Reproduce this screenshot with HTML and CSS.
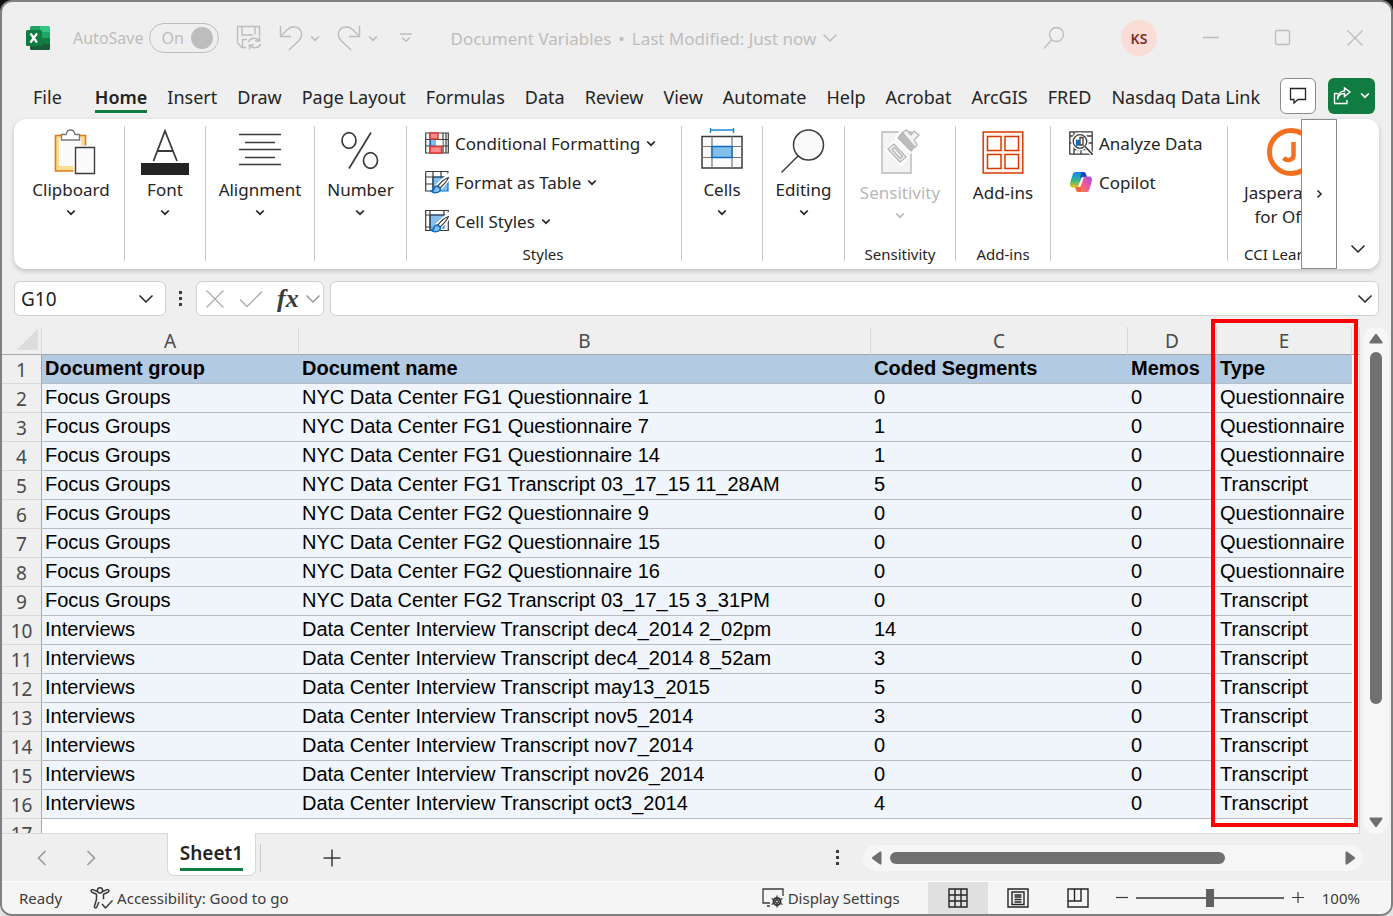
FILE: index.html
```html
<!DOCTYPE html>
<html lang="en">
<head>
  <meta charset="UTF-8">
  <meta name="viewport" content="width=device-width, initial-scale=1">
  <title>Document Variables</title>
  <link rel="stylesheet" href="styles.css">
</head>
<body>

  <svg class="defs" width="0" height="0" aria-hidden="true">
    <symbol id="chev" viewBox="0 0 16 10"><path d="M1.5 1.5 8 8l6.500-6.500" fill="none" stroke="currentColor" stroke-width="1.500"/></symbol>
    <symbol id="chev-s" viewBox="0 0 10 7"><path d="M1.200 1.500 5 5.200l3.800-3.700" fill="none" stroke="currentColor" stroke-width="1.700"/></symbol>
    <symbol id="brush" viewBox="0 0 24 24">
      <path d="M23 6 13 15l2.500 2.500L24 8z" fill="#fff" stroke="#fff" stroke-width="4"/>
      <path d="M23.500 7.500c-4 1.500-8 5-10.500 8.500l2 2c3.500-3 7-7 8.500-10.500z" fill="#fff" stroke="#3b3b3b" stroke-width="1.200"/>
      <path d="M12.500 16c-2.500 0-3.300 1.500-3.500 3-.3 1.300-1.500 2-3 2 2.500 2.500 9 2.500 9.500-2z" fill="#83beec" stroke="#0f6cbd" stroke-width="1.400"/>
    </symbol>
  </svg>

  <div class="window">

    <header class="titlebar">
      <svg class="logo" viewBox="0 0 24 24" width="24" height="24">
        <path d="M6 0h9v6H4V1.500Q4 0 6 0z" fill="#21a366"/>
        <path d="M14 0h8.500Q24 0 24 1.500V6H14z" fill="#33c481"/>
        <path d="M4 6h10v6H4z" fill="#107c41"/>
        <path d="M14 6h10v6H14z" fill="#21a366"/>
        <path d="M14 12h10v6H14z" fill="#107c41"/>
        <path d="M4 12h10v6h10v4.500q0 1.500-1.500 1.500H5.500Q4 24 4 22.500z" fill="#185c37"/>
        <rect y="4" width="16" height="16" rx="1.500" fill="#107c41"/>
        <path d="m4.500 7.500 6.500 9M11 7.500l-6.500 9" stroke="#fff" stroke-width="2.200"/>
      </svg>
      <label class="autosave" for="autosave">AutoSave
        <span class="toggle"><input type="checkbox" id="autosave" checked disabled><span>On</span><i></i></span>
      </label>
      <button class="bare save" aria-label="Save"><svg width="26" height="26" viewBox="0 0 26 26" fill="none" stroke="currentColor" stroke-width="1.400">
        <path d="M10 22.500H6L1.500 18V1.500h22V11M6 1.500V10h11M19 1.500v8M6.500 22v-7.500H11"/>
        <path d="M12.500 17c1.500-4.500 8-5 10.500-1.500M23.500 11.500v4.500H19M24.500 19c-1.500 4.500-8 5-10.500 1.500M13.500 24.500V20H18"/></svg></button>
      <button class="bare undo" aria-label="Undo"><svg width="24" height="26" viewBox="0 0 24 26" fill="none" stroke="currentColor" stroke-width="1.500"><path d="M1.500 1v10.500H12M2 11 8.500 4.500c4-4 9-3.500 12-.5s3 8-.5 11.500L10 25"/></svg></button>
      <button class="bare" aria-label="Undo list"><svg width="10" height="7"><use href="#chev-s"/></svg></button>
      <button class="bare redo" aria-label="Redo"><svg width="24" height="26" viewBox="0 0 24 26" fill="none" stroke="currentColor" stroke-width="1.500"><path d="M22.500 1v10.500H12M22 11l-6.500-6.500c-4-4-9-3.500-12-.5s-3 8 .5 11.500L14 25"/></svg></button>
      <button class="bare" aria-label="Redo list"><svg width="10" height="7"><use href="#chev-s"/></svg></button>
      <button class="bare customize" aria-label="Customize toolbar"><svg width="12" height="10" viewBox="0 0 12 10" fill="none" stroke="currentColor" stroke-width="1.500"><path d="M0 1h12M2 4.500l4 3.700 4-3.700"/></svg></button>
      <button class="bare doc-title">Document Variables<span>•</span>Last Modified: Just now <svg width="16" height="10"><use href="#chev"/></svg></button>
      <button class="bare search" aria-label="Search"><svg width="22" height="24" viewBox="0 0 22 24" fill="none" stroke="currentColor" stroke-width="1.400"><circle cx="13.500" cy="8.500" r="7"/><path d="M8.500 14 1 22.500"/></svg></button>
      <button class="avatar">KS</button>
      <div class="window-buttons">
        <button class="bare" aria-label="Minimize"><svg width="18" height="18"><path d="M1 8.500h16" stroke="currentColor" stroke-width="1.300"/></svg></button>
        <button class="bare" aria-label="Maximize"><svg width="18" height="18" fill="none"><rect x="1.500" y="1.500" width="14" height="14" rx="1.500" stroke="currentColor" stroke-width="1.400"/></svg></button>
        <button class="bare" aria-label="Close"><svg width="18" height="18"><path d="m1.500 1.500 15 15m0-15-15 15" stroke="currentColor" stroke-width="1.400"/></svg></button>
      </div>
    </header>

    <nav class="tabs">
      <button class="file">File</button>
      <button class="active">Home</button>
      <button>Insert</button>
      <button>Draw</button>
      <button>Page Layout</button>
      <button>Formulas</button>
      <button>Data</button>
      <button>Review</button>
      <button>View</button>
      <button>Automate</button>
      <button>Help</button>
      <button>Acrobat</button>
      <button>ArcGIS</button>
      <button>FRED</button>
      <button>Nasdaq Data Link</button>
      <div class="tab-actions">
        <button class="comment" aria-label="Comments"><svg width="18" height="18" viewBox="0 0 18 18" fill="none" stroke="currentColor" stroke-width="1.300"><path d="M1.500 1.500h15v11H9l-4 3.500v-3.500H1.500z"/></svg></button>
        <button class="share" aria-label="Share"><svg width="18" height="18" viewBox="0 0 18 18" fill="none" stroke="currentColor" stroke-width="1.400"><path d="M5 6.500H1.500v10H14V13M4.500 12.500c.5-4 3-6 7-6V9.500L17 5l-5.500-4v3C7 4 4.500 7.500 4.500 12.500z"/></svg><svg width="10" height="7"><use href="#chev-s"/></svg></button>
      </div>
    </nav>

    <section class="ribbon">
      <div class="group g-clipboard">
        <button class="big"><span class="icon"><svg width="50" height="46" viewBox="-8 0 50 46">
          <path d="M1.500 6.500h30V42h-30z" fill="#fbdc93" stroke="#e07b16" stroke-width="1.600"/>
          <path d="M5 9h22v28H5z" fill="#fafafa"/>
          <path d="M19.500 16.500h22V46h-22z" fill="#fff"/>
          <path d="M7.500 11V5.500h4.700C13 -.5 20 -.5 21 5.500h4.500V11z" fill="#fff" stroke="#777" stroke-width="1.300"/>
          <path d="M21.500 18.500h19v26h-19z" fill="#fafafa" stroke="#3b3b3b" stroke-width="1.400"/></svg></span>Clipboard<svg width="10" height="7"><use href="#chev-s"/></svg></button>
      </div>
      <div class="group g-font">
        <button class="big"><span class="icon"><svg width="48" height="46" viewBox="0 0 48 46"><path d="M12.500 32 24 2l12 30M16.500 22h15" fill="none" stroke="#3b3b3b" stroke-width="1.800"/><path d="M0 34h48v12H0z" fill="#242424"/></svg></span>Font<svg width="10" height="7"><use href="#chev-s"/></svg></button>
      </div>
      <div class="group g-align">
        <button class="big"><span class="icon"><svg width="42" height="46" viewBox="0 0 42 46"><path d="M0 5.500h42M6 13.500h30M0 20.500h42M6 28.500h30M0 35.500h42" stroke="#3b3b3b" stroke-width="1.400"/></svg></span>Alignment<svg width="10" height="7"><use href="#chev-s"/></svg></button>
      </div>
      <div class="group g-number">
        <button class="big"><span class="icon"><svg width="38" height="46" viewBox="0 0 38 46" fill="none" stroke="#3b3b3b" stroke-width="1.700"><path d="M30 3.500 8 39.500"/><ellipse cx="8" cy="11.500" rx="7" ry="7.800"/><ellipse cx="29.500" cy="31.500" rx="7" ry="7.800"/></svg></span>Number<svg width="10" height="7"><use href="#chev-s"/></svg></button>
      </div>
      <div class="group g-styles">
        <button class="row"><svg width="24" height="24" viewBox="0 0 24 24" fill="none" stroke="#3b3b3b" stroke-width="1.200"><path d="M.7 2h22.600v20H.7zM.7 8.500h22.600M.7 15h22.600M5 2v20M18 2v20M21 2v20"/><path d="M5.500 8.500h5V15h-5z" fill="#83beec" stroke="#0f6cbd"/><path d="M10.500 9h7v5.500h-7z" fill="#fff" stroke="none"/><path d="M5 2h8v6H5zM5 15.500h11.500V22H5z" fill="#ff8b8b" stroke="#e3342f" stroke-width="1.400"/></svg>Conditional Formatting<svg width="10" height="7"><use href="#chev-s"/></svg></button>
        <button class="row"><svg width="24" height="24" viewBox="0 0 24 24" fill="none" stroke="#3b3b3b" stroke-width="1.200"><path d="M8 7h15v14H8z" fill="#83beec" stroke="#0f6cbd"/><path d="M.7 1.500h22.600M.7 1.500V21h7M.7 7h22M.7 14H8M8 1.500V21M16 1.500V7M23 1.500V6"/><use href="#brush"/></svg>Format as Table<svg width="10" height="7"><use href="#chev-s"/></svg></button>
        <button class="row"><svg width="24" height="24" viewBox="0 0 24 24" fill="none" stroke="#3b3b3b" stroke-width="1.200"><path d="M5 6h14v13H5z" fill="#83beec" stroke="#0f6cbd"/><path d="M.7 1.500h22.600v20H.7zM.7 6h22M5 1.500V21M19 1.500V6M.7 18H5"/><use href="#brush"/></svg>Cell Styles<svg width="10" height="7"><use href="#chev-s"/></svg></button>
        <div class="group-name">Styles</div>
      </div>
      <div class="group g-cells">
        <button class="big"><span class="icon"><svg width="42" height="48" viewBox="0 2 42 48" fill="none"><path d="M9.500 4h23M9.500 2v5M32.500 2v5" stroke="#1a86d0" stroke-width="1.400" /><path d="M1 10.500h40V42H1z" fill="#fafafa" stroke="#3b3b3b" stroke-width="1.500"/><path d="M1 20.500h40M1 31.500h40M11 10.500V42M31 10.500V42" stroke="#777" stroke-width="1.200"/><path d="M11 20.500h20v11H11z" fill="#83beec" stroke="#0f6cbd" stroke-width="1.500"/></svg></span>Cells<svg width="10" height="7"><use href="#chev-s"/></svg></button>
      </div>
      <div class="group g-editing">
        <button class="big"><span class="icon"><svg width="46" height="46" viewBox="2 1 46 46" fill="#fafafa" stroke="#3b3b3b" stroke-width="1.500"><circle cx="29.500" cy="17" r="15"/><path d="M19 28 2.500 44.500"/></svg></span>Editing<svg width="10" height="7"><use href="#chev-s"/></svg></button>
      </div>
      <div class="group g-sensitivity">
        <button class="big tall" disabled><span class="icon"><svg width="40" height="46" viewBox="0 0 40 46" fill="#f3f3f3" stroke="#b8b8b8" stroke-width="1.400"><path d="M2 4h29v41H2z"/><g stroke="#fff" stroke-width="5"><path d="m8 22 6-6 13 13-6 6zM17 10l5-6 14 13-6 6z"/></g><path d="m8 21 6-5 12 13-6 5z"/><path d="m12 21.500 2.500-2 8 9-2.500 2z"/><path d="m18 10 4-5 13 13-4 5z" fill="#bdbdbd"/><path d="m22.500 4.500 4-2.500 4.500 5 3-4 5 4-5 5 3 5-2 2.500z"/></svg></span>Sensitivity<svg width="10" height="7"><use href="#chev-s"/></svg></button>
        <div class="group-name">Sensitivity</div>
      </div>
      <div class="group g-addins">
        <button class="big tall"><span class="icon"><svg width="42" height="46" viewBox="0 0 42 46" fill="#fff" stroke="#d83b01" stroke-width="1.500"><path d="M1.200 4h39.600v41H1.200z" fill="#fff5ef"/><path d="M5.500 8.500H19v14H5.500zM23 8.500h13.500v14H23zM5.500 26.500H19v14H5.500zM23 26.500h13.500v14H23z"/></svg></span>Add-ins</button>
        <div class="group-name">Add-ins</div>
      </div>
      <div class="group g-analysis">
        <button class="row"><svg width="24" height="24" viewBox="0 0 24 24" fill="none" stroke="#3b3b3b" stroke-width="1.300"><path d="M.8.800h22.400v22.400H.8zM.8 5h22.400M5 1v22M5 18.500h12M.8 12H5M19 12h4M12 19v4"/><circle cx="11" cy="10.500" r="7.500" fill="#fff" stroke="#fff" stroke-width="3"/><circle cx="11" cy="10.500" r="6.800" fill="#fff"/><path d="m16 15.500 7 7.500" stroke="#fff" stroke-width="4"/><path d="m16 15.500 7.500 8" stroke-width="1.600"/><path d="M7.500 9.500h2.500V14H7.500z" fill="#0f6cbd" stroke="#0f6cbd"/><path d="M11 6.500h3V14h-3z"/></svg>Analyze Data</button>
        <button class="row"><svg width="24" height="24" viewBox="0 0 24 24">
          <defs>
            <linearGradient id="cp1" x1="0" y1="0" x2="0" y2="1"><stop offset="0" stop-color="#0f8cf0"/><stop offset=".55" stop-color="#37b58c"/><stop offset="1" stop-color="#f2c40c"/></linearGradient>
            <linearGradient id="cp2" x1="1" y1="0" x2="0" y2="1"><stop offset="0" stop-color="#9b4df0"/><stop offset=".5" stop-color="#f0569a"/><stop offset="1" stop-color="#ff8a3c"/></linearGradient>
          </defs>
          <path d="M6.500 2h8l-4 13c-.8 2-1.500 2.500-4 2.500H4c-3 0-3.500-2.500-2.500-6L3.500 5C4 3 5 2 6.500 2z" fill="url(#cp1)"/>
          <path d="M12 2h2.500c2 0 2.300 1 3 3.500l.5 1.500h-4c-2 0-2.500 1-3 2.500z" fill="#1548c0"/>
          <path d="M17.500 22h-8l4-13c.8-2 1.500-2.500 4-2.500H20c3 0 3.500 2.500 2.500 6L20.500 19c-.5 2-1.500 3-3 3z" fill="url(#cp2)"/>
          <path d="M12 22H9.500c-2 0-2.300-1-3-3.500L6 17h4c2 0 2.500-1 3-2.500z" fill="#f4663c"/>
          <path d="M12.500 8h2.300L11.500 16.500H9z" fill="#fff"/></svg>Copilot</button>
      </div>
      <div class="group g-jasper">
        <button class="big tall"><span class="icon"><svg width="50" height="48" viewBox="0 0 50 48" fill="none" stroke="#f37021"><ellipse cx="24" cy="24" rx="21.500" ry="21.500" stroke-width="5"/><path d="M26.500 14v13.500c0 4.500-6 6-10 2.500" stroke-width="4.500"/></svg></span>Jasperactive<br>for Office</button>
        <div class="group-name">CCI Learning</div>
      </div>
      <button class="ribbon-next" aria-label="More commands"><svg width="7" height="10" viewBox="0 0 7 10"><path d="m1.500 1.500 3.500 3.500-3.500 3.500" fill="none" stroke="currentColor" stroke-width="1.500"/></svg></button>
      <button class="ribbon-collapse" aria-label="Ribbon display options"><svg width="16" height="10"><use href="#chev"/></svg></button>
    </section>

    <div class="formula-bar">
      <div class="box name-box">
        <input type="text" value="G10" aria-label="Name box">
        <button class="bare" aria-label="Names"><svg width="16" height="10"><use href="#chev"/></svg></button>
      </div>
      <span class="dots"></span>
      <div class="box fx-box">
        <button class="bare" aria-label="Cancel"><svg width="20" height="20"><path d="m1.500 1.500 17 17m0-17-17 17" stroke="#b0b0b0" stroke-width="1.400"/></svg></button>
        <button class="bare" aria-label="Enter"><svg width="24" height="18"><path d="m1 9.500 7 7L23 1.500" fill="none" stroke="#b0b0b0" stroke-width="1.400"/></svg></button>
        <button class="bare fx" aria-label="Insert function">fx</button>
        <button class="bare fx-more" aria-label="Functions"><svg width="16" height="10"><use href="#chev"/></svg></button>
      </div>
      <div class="box formula">
        <input type="text" aria-label="Formula">
        <button class="bare" aria-label="Expand formula bar"><svg width="16" height="10"><use href="#chev"/></svg></button>
      </div>
    </div>

    <main class="sheet">
      <div class="grid">
        <table>
          <colgroup><col class="c-num"><col class="c-a"><col class="c-b"><col class="c-c"><col class="c-d"><col class="c-e"><col class="c-rest"></colgroup>
          <thead>
            <tr><th class="corner"></th><th>A</th><th>B</th><th>C</th><th>D</th><th>E</th><th></th></tr>
          </thead>
          <tbody>
            <tr class="head"><th>1</th><td>Document group</td><td>Document name</td><td>Coded Segments</td><td>Memos</td><td>Type</td><td></td></tr>
            <tr><th>2</th><td>Focus Groups</td><td>NYC Data Center FG1 Questionnaire 1</td><td>0</td><td>0</td><td>Questionnaire</td><td></td></tr>
            <tr><th>3</th><td>Focus Groups</td><td>NYC Data Center FG1 Questionnaire 7</td><td>1</td><td>0</td><td>Questionnaire</td><td></td></tr>
            <tr><th>4</th><td>Focus Groups</td><td>NYC Data Center FG1 Questionnaire 14</td><td>1</td><td>0</td><td>Questionnaire</td><td></td></tr>
            <tr><th>5</th><td>Focus Groups</td><td>NYC Data Center FG1 Transcript 03_17_15 11_28AM</td><td>5</td><td>0</td><td>Transcript</td><td></td></tr>
            <tr><th>6</th><td>Focus Groups</td><td>NYC Data Center FG2 Questionnaire 9</td><td>0</td><td>0</td><td>Questionnaire</td><td></td></tr>
            <tr><th>7</th><td>Focus Groups</td><td>NYC Data Center FG2 Questionnaire 15</td><td>0</td><td>0</td><td>Questionnaire</td><td></td></tr>
            <tr><th>8</th><td>Focus Groups</td><td>NYC Data Center FG2 Questionnaire 16</td><td>0</td><td>0</td><td>Questionnaire</td><td></td></tr>
            <tr><th>9</th><td>Focus Groups</td><td>NYC Data Center FG2 Transcript 03_17_15 3_31PM</td><td>0</td><td>0</td><td>Transcript</td><td></td></tr>
            <tr><th>10</th><td>Interviews</td><td>Data Center Interview Transcript dec4_2014 2_02pm</td><td>14</td><td>0</td><td>Transcript</td><td></td></tr>
            <tr><th>11</th><td>Interviews</td><td>Data Center Interview Transcript dec4_2014 8_52am</td><td>3</td><td>0</td><td>Transcript</td><td></td></tr>
            <tr><th>12</th><td>Interviews</td><td>Data Center Interview Transcript may13_2015</td><td>5</td><td>0</td><td>Transcript</td><td></td></tr>
            <tr><th>13</th><td>Interviews</td><td>Data Center Interview Transcript nov5_2014</td><td>3</td><td>0</td><td>Transcript</td><td></td></tr>
            <tr><th>14</th><td>Interviews</td><td>Data Center Interview Transcript nov7_2014</td><td>0</td><td>0</td><td>Transcript</td><td></td></tr>
            <tr><th>15</th><td>Interviews</td><td>Data Center Interview Transcript nov26_2014</td><td>0</td><td>0</td><td>Transcript</td><td></td></tr>
            <tr><th>16</th><td>Interviews</td><td>Data Center Interview Transcript oct3_2014</td><td>4</td><td>0</td><td>Transcript</td><td></td></tr>
            <tr class="empty"><th>17</th><td></td><td></td><td></td><td></td><td></td><td></td></tr>
          </tbody>
        </table>
      </div>
      <div class="highlight"></div>
      <div class="vscroll">
        <svg width="14" height="11"><path d="M6 1.500q1-1.500 2 0l5.500 7.500q.5 1.500-1 1.500h-11q-1.500 0-1-1.500z" fill="#6e6e6e"/></svg>
        <div class="track"><div class="thumb"></div></div>
        <svg width="14" height="11"><path d="M6 9.500q1 1.500 2 0L13.500 2q.5-1.500-1-1.500h-11Q0 .5.500 2z" fill="#6e6e6e"/></svg>
      </div>
    </main>

    <div class="sheet-tabs">
      <button class="bare nav-btn" aria-label="Previous sheet"><svg width="10" height="16"><path d="M8.500 1 1.500 8l7 7" fill="none" stroke="#999" stroke-width="1.600"/></svg></button>
      <button class="bare nav-btn" aria-label="Next sheet"><svg width="10" height="16"><path d="m1.500 1 7 7-7 7" fill="none" stroke="#999" stroke-width="1.600"/></svg></button>
      <button class="sheet-tab"><span>Sheet1</span></button>
      <button class="bare add-sheet" aria-label="New sheet"><svg width="18" height="18"><path d="M9 0.500v17M.5 9h17" stroke="#3b3b3b" stroke-width="1.500"/></svg></button>
      <span class="dots"></span>
      <div class="hscroll">
        <svg width="11" height="14"><path d="M1.500 6q-1.500 1 0 2L9 13.500q1.500.5 1.500-1v-11Q10.500 0 9 .5z" fill="#6e6e6e"/></svg>
        <div class="track"><div class="thumb"></div></div>
        <svg width="11" height="14"><path d="M9.500 6q1.500 1 0 2L2 13.500q-1.500.5-1.500-1v-11Q.5 0 2 .5z" fill="#6e6e6e"/></svg>
      </div>
    </div>

    <footer class="status">
      <span class="ready">Ready</span>
      <button class="bare access"><svg width="24" height="24" viewBox="0 0 24 24" fill="none" stroke="currentColor" stroke-width="1.500" stroke-linejoin="round"><circle cx="10" cy="4.300" r="2.600"/><path d="M7.500 5.500 3 3.600C1 3 .5 5.500 2 6.200l4.500 2v5L4.500 20c-.5 2 1.500 2.600 2.300 1l2-5M12.500 5.500l4.500-1.900c2-.6 2.500 1.900 1 2.600l-4.500 2v5M12 18l3.500 4L22.500 14.500"/></svg>Accessibility: Good to go</button>
      <button class="bare display"><svg width="22" height="22" viewBox="0 0 22 22" fill="none" stroke="currentColor" stroke-width="1.300"><path d="M21 9V2H1v14h7M5 19h3"/><circle cx="15" cy="14.500" r="3.500" stroke-width="2"/><path d="M15 8.500v12M9.500 11.500l11 6M9.500 17.500l11-6"/><circle cx="15" cy="14.500" r="1.500" fill="#fff"/></svg>Display Settings</button>
      <div class="views">
        <button class="on" aria-label="Normal"><svg width="20" height="20" fill="none" stroke="#242424" stroke-width="1.400"><path d="M1 1h18v18H1zM7 1v18M13 1v18M1 7h18M1 13h18"/></svg></button>
        <button aria-label="Page layout"><svg width="22" height="20" fill="none" stroke="#242424" stroke-width="1.400"><path d="M1 1h20v18H1zM5 4h12v12.500H5zM7.500 7h7M7.500 9h7M7.500 11.500h7M7.500 14h7"/></svg></button>
        <button aria-label="Page break preview"><svg width="22" height="20" fill="none" stroke="#242424" stroke-width="1.400"><path d="M1 1h20v18H1zM1 13h13V1M7.500 1v12"/></svg></button>
      </div>
      <div class="zoom">
        <button class="bare" aria-label="Zoom out"><svg width="12" height="12"><path d="M0 5.500h12" stroke="#3b3b3b" stroke-width="1.200"/></svg></button>
        <input type="range" min="0" max="100" value="50" aria-label="Zoom">
        <button class="bare" aria-label="Zoom in"><svg width="12" height="12"><path d="M0 5.500h12M6 0v11" stroke="#3b3b3b" stroke-width="1.200"/></svg></button>
        <button class="bare percent">100%</button>
      </div>
    </footer>

  </div>
</body>
</html>
```
FILE: styles.css
```css
* { box-sizing: border-box; }
body {
  margin: 0;
  font-family: "Noto Sans", sans-serif;
  font-size: 17px;
  color: #242424;
  background: linear-gradient(#111 50%, #e4e4e4 50%);
}
button, input { font: inherit; color: inherit; margin: 0; }
button {
  padding: 0;
  border: none;
  background: none;
  white-space: nowrap;
}
svg { flex: none; }
.defs { position: absolute; }
.bare {
  display: flex;
  align-items: center;
  justify-content: center;
}
.window {
  display: flex;
  flex-direction: column;
  height: 100vh;
  border: 2px solid #808080;
  border-radius: 12px;
  background: #efefef;
  overflow: hidden;
}

/* title bar */
.titlebar {
  display: flex;
  align-items: center;
  height: 72px;
  padding-left: 24px;
  color: #bdbdbd;
  flex: none;
}
.autosave {
  display: flex;
  align-items: center;
  gap: 6px;
  margin-left: 23px;
  font-size: 16px;
}
.toggle {
  display: flex;
  align-items: center;
  justify-content: space-between;
  width: 70px;
  height: 30px;
  padding: 0 5px 0 11px;
  border: 1px solid #bdbdbd;
  border-radius: 15px;
}
.toggle input {
  position: absolute;
  opacity: 0;
}
.toggle i {
  width: 22px;
  height: 22px;
  border-radius: 50%;
  background: #bdbdbd;
}
.save { margin-left: 17px; }
.undo { margin: 0 7px 0 17px; }
.redo { margin: 0 7px 0 17px; }
.customize { margin-left: 22px; }
.doc-title { margin-left: 38px; }
.doc-title span { margin: 0 7px; }
.doc-title svg { margin-left: 6px; }
.search { margin: 0 56px 0 auto; }
.avatar {
  width: 36px;
  height: 36px;
  margin-right: 18px;
  border-radius: 50%;
  background: #fbddd8;
  color: #7a2e26;
  font-size: 14px;
  font-weight: 600;
}
.window-buttons { display: flex; }
.window-buttons button { width: 72px; height: 40px; }

/* tabs */
.tabs {
  display: flex;
  align-items: center;
  gap: 20px;
  height: 45px;
  padding: 0 18px 2px 31px;
  font-size: 18px;
  flex: none;
}
.tabs .file { margin-right: 13px; }
.tabs > button { padding-top: 6px; line-height: 26px; border-bottom: 3px solid transparent; }
.tabs .active {
  font-weight: 600;
  border-color: #107c41;
}
.tab-actions {
  display: flex;
  gap: 12px;
  margin-left: auto;
}
.comment, .share {
  display: flex;
  align-items: center;
  justify-content: center;
  gap: 9px;
  width: 36px;
  height: 36px;
  border: 1px solid #8a8a8a;
  border-radius: 6px;
  background: #fff;
}
.share {
  width: 47px;
  border: none;
  background: #107c41;
  color: #fff;
}

/* ribbon */
.ribbon {
  display: flex;
  height: 150px;
  margin: 0 12px;
  border-radius: 12px;
  background: #fff;
  box-shadow: 0 2px 5px rgba(0,0,0,0.2);
  overflow: hidden;
  flex: none;
}
.group {
  display: flex;
  flex-direction: column;
  align-items: center;
  flex: none;
  height: 135px;
  margin-top: 7px;
  border-right: 1px solid #c8c8c8;
}
.g-clipboard { width: 111px; padding-left: 4px; }
.g-font { width: 81px; }
.g-align { width: 109px; }
.g-number { width: 92px; }
.g-styles { width: 275px; align-items: flex-start; padding-left: 18px; }
.g-cells { width: 81px; }
.g-editing { width: 82px; }
.g-sensitivity { width: 111px; }
.g-addins { width: 95px; }
.g-analysis { width: 177px; align-items: flex-start; padding-left: 18px; }
.g-jasper {
  flex: 1;
  align-items: flex-start;
  height: 143px;
  padding: 0 0 8px 16px;
  border: none;
  overflow: hidden;
}
.big {
  display: flex;
  flex-direction: column;
  align-items: center;
  line-height: 24px;
}
.big .icon {
  display: flex;
  align-items: center;
  justify-content: center;
  height: 52px;
}
.tall .icon {
  align-items: flex-start;
  height: 55px;
  padding-top: 2px;
}
.big > svg { margin-top: 7px; }
.big:disabled { color: #b8b8b8; }
.row {
  display: flex;
  align-items: center;
  gap: 6px;
  height: 34px;
  margin-bottom: 5px;
}
.group-name {
  align-self: center;
  margin: auto 0 -4px;
  font-size: 15px;
  line-height: 22px;
  white-space: nowrap;
}
.g-styles .group-name { margin-right: 20px; }
.g-jasper .group-name { align-self: flex-start; }
.ribbon-next {
  display: flex;
  align-items: center;
  justify-content: center;
  width: 36px;
  border: 1px solid #8a8a8a;
  background: #fff;
  flex: none;
}
.ribbon-collapse {
  width: 42px;
  padding-top: 106px;
  flex: none;
}

/* formula bar */
.formula-bar {
  display: flex;
  align-items: center;
  height: 35px;
  margin: 12px 12px 0;
  flex: none;
}
.box {
  display: flex;
  align-items: center;
  height: 35px;
  border: 1px solid #d0d0d0;
  border-radius: 6px;
  background: #fff;
}
.box input {
  flex: 1;
  min-width: 0;
  padding: 0 0 0 6px;
  border: none;
  background: none;
  outline: none;
}
.name-box { width: 152px; padding-right: 11px; font-size: 19px; }
.fx-box { width: 128px; padding: 0 2px 0 8px; gap: 14px; }
.fx {
  font-family: "Liberation Serif", serif;
  font-size: 26px;
  font-style: italic;
  font-weight: bold;
  line-height: 28px;
  color: #3b3b3b;
}
.fx-more { margin-left: -8px; color: #999; }
.formula { flex: 1; margin-left: 6px; padding-right: 5px; }
.dots {
  width: 3px;
  height: 15px;
  margin: 0 14px 0 13px;
  background: repeating-linear-gradient(#3b3b3b 0 3px, transparent 3px 6px);
}

/* sheet */
.sheet {
  display: flex;
  position: relative;
  flex: 1;
  min-height: 0;
  margin-top: 11px;
}
.grid {
  flex: 1;
  overflow: hidden;
  background: #fff;
  border-right: 1px solid #d8d8d8;
  border-bottom: 1px solid #d8d8d8;
}
table {
  width: 100%;
  table-layout: fixed;
  border-collapse: separate;
  border-spacing: 0;
}
.c-num { width: 40px; }
.c-a, .c-c { width: 257px; }
.c-d { width: 89px; }
.c-e { width: 135px; }
.c-rest { width: 7px; }
th {
  padding: 0;
  background: #efefef;
  color: #4a4a4a;
  font-size: 19px;
  font-weight: normal;
}
thead th {
  height: 28px;
  line-height: 26px;
  border-right: 1px solid #d8d8d8;
  border-bottom: 1px solid #a6a6a6;
}
thead th:last-child { border-right: none; }
.corner { background: linear-gradient(135deg, transparent 50%, #dcdcdc 50%) 15px 2px / 21px 21px no-repeat #efefef; }
tbody th {
  height: 29px;
  padding-top: 3px;
  line-height: 25px;
  border-right: 1px solid #a6a6a6;
  border-bottom: 1px solid #d8d8d8;
}
td {
  padding: 0 0 2px 3px;
  font-family: "Liberation Sans", sans-serif;
  font-size: 20px;
  line-height: 26px;
  color: #000;
  white-space: nowrap;
  background: #eff5fa;
  border-bottom: 1px solid #b8bcc0;
}
.head td {
  font-weight: bold;
  background: #b3cae3;
}
td:last-child, .head td:last-child, .empty td {
  padding: 0;
  background: #fff;
  border-bottom: none;
}
.highlight {
  position: absolute;
  top: -8px;
  right: 33px;
  width: 147px;
  height: 508px;
  border: 4px solid #f00;
}
.track { flex: 1; display: flex; }
.thumb {
  border-radius: 6px;
  background: #707070;
}
.vscroll {
  display: flex;
  flex-direction: column;
  align-items: center;
  gap: 8px;
  width: 26px;
  margin: 0 2px 0 3px;
  padding: 6px 0;
  border-radius: 12px;
  background: #f6f6f6;
}
.vscroll .thumb { width: 12px; height: 77%; }

/* sheet tabs */
.sheet-tabs {
  display: flex;
  align-items: center;
  height: 47px;
  flex: none;
}
.nav-btn { width: 49px; }
.nav-btn:first-child { margin-left: 15px; }
.sheet-tab {
  align-self: flex-start;
  width: 89px;
  height: 43px;
  margin: -1px 0 0 52px;
  border: 1px solid #d8d8d8;
  border-top: none;
  border-radius: 0 0 7px 7px;
  background: #fff;
  font-size: 19px;
  font-weight: 600;
  position: relative;
}
.sheet-tab span {
  display: inline-block;
  line-height: 30px;
  border-bottom: 3px solid #107c41;
}
.add-sheet {
  height: 28px;
  margin-left: 4px;
  padding-left: 62px;
  border-left: 1px solid #c8c8c8;
}
.sheet-tabs .dots { margin: 0 24px 0 auto; }
.hscroll {
  display: flex;
  align-items: center;
  gap: 8px;
  width: 36%;
  height: 26px;
  margin-right: 28px;
  padding: 0 7px 0 8px;
  border-radius: 13px;
  background: #f6f6f6;
}
.hscroll .thumb { width: 75%; height: 12px; }

/* status bar */
.status {
  display: flex;
  align-items: center;
  height: 33px;
  padding-left: 17px;
  border-top: 1px solid #fff;
  background: #f5f5f5;
  font-size: 15px;
  color: #3b3b3b;
  flex: none;
}
.access { margin-left: 28px; gap: 3px; }
.display { margin-left: auto; gap: 4px; }
.views { display: flex; align-self: stretch; margin-left: 28px; }
.views button { width: 60px; }
.views .on { background: #e0e0e0; }
.views svg { display: block; margin: auto; }
.zoom { display: flex; align-items: center; margin: 0 31px 0 8px; }
.zoom input {
  width: 148px;
  height: 18px;
  margin: 0 8px;
  appearance: none;
  background: linear-gradient(#666, #666) center / 100% 2px no-repeat;
}
.zoom input::-webkit-slider-thumb {
  appearance: none;
  width: 8px;
  height: 18px;
  background: #606060;
}
.percent { margin-left: 18px; }
```
